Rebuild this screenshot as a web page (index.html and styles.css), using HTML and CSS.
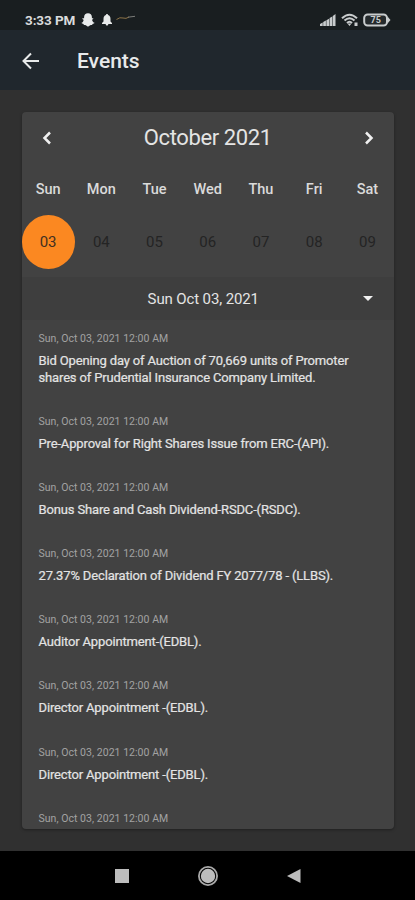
FILE: index.html
```html
<!DOCTYPE html>
<html lang="en">
<head>
<meta charset="utf-8">
<title>Events</title>
<link rel="stylesheet" href="styles.css">
</head>
<body>
<div class="status">
  <span class="clock">3:33 PM</span>
  <svg class="ghost" width="14" height="14" viewBox="0 0 14 14"><path d="M7 .3C4.600.3 3.100 2 3.100 4v1.300l-1.700-.1c-.4.6.4 1 1.200 1.500C2.600 8.300 1.700 9.300.5 9.800c.1.900 1.100 1 2 1.200l.4 1c1.500-.2 2.300.3 4.100 1.700 1.800-1.400 2.600-1.900 4.100-1.700l.4-1c.9-.2 1.900-.3 2-1.200-1.200-.5-2.100-1.500-2.500-3.100.8-.5 1.600-.9 1.200-1.500l-1.300.1V4C10.900 2 9.400.3 7 .3z"/></svg>
  <svg class="bell" width="12" height="14" viewBox="0 0 12 14"><path d="M6 1c.6 0 1 .4 1 1 1.800.5 2.500 2 2.500 4v2.500L11 10v1H1v-1l1.500-1.500V6c0-2 .7-3.500 2.500-4 0-.6.4-1 1-1zM4.700 11h2.600c0 2-2.600 2-2.600 0z"/></svg>
  <svg class="swoosh" width="20" height="8" viewBox="0 0 20 8"><path d="M.5 5.500Q4 2.800 7 4t6-1" stroke="#8d7347"/><path d="M12 3.200l7-.9" stroke="#7b7c79"/></svg>
  <svg class="signal" width="18" height="14" viewBox="0 0 18 14"><path d="M1 13v-2l2.700-1.500V13zM4.200 13V9l2.700-1.500V13zM7.400 13V7.200l2.700-1.500V13zM10.600 13V5l2.700-1.500V13zM13.800 13V3l2.700-2v12z"/></svg>
  <svg class="wifi" width="18" height="14" viewBox="0 0 18 14"><path d="M1 5.200q7.500-7 15 0M3.500 7.600q5-4.600 10 0M6 10q2.500-2.400 5 0" fill="none" stroke="#c9cccd" stroke-width="2"/><path d="M6.500 10.500L8.500 13l2-2.500zM13.500 9.500h3v3.500h-3z"/></svg>
  <svg class="battery" width="28" height="14" viewBox="0 0 28 14"><rect x="1.200" y="1.400" width="22.800" height="11.200" rx="3.500" fill="#252a2c" stroke="#c9cccd" stroke-width="2"/><path d="M24.500 3.500L27.500 7l-3 3.500z"/><text x="7.500" y="10.300">75</text></svg>
</div>
<header class="appbar">
  <svg width="20" height="20" viewBox="0 0 20 20"><path d="M18 10H2.500M10 2.500L2.500 10l7.500 7.500"/></svg>
  <h1>Events</h1>
</header>
<main>
  <section class="card">
    <div class="month">
      <svg width="10" height="14" viewBox="0 0 10 14"><path d="M8 1.500L2.500 7 8 12.500"/></svg>
      <h2>October 2021</h2>
      <svg width="10" height="14" viewBox="0 0 10 14"><path d="M2 1.500L7.500 7 2 12.500"/></svg>
    </div>
    <div class="week names"><span>Sun</span><span>Mon</span><span>Tue</span><span>Wed</span><span>Thu</span><span>Fri</span><span>Sat</span></div>
    <div class="week days"><span class="selected">03</span><span>04</span><span>05</span><span>06</span><span>07</span><span>08</span><span>09</span></div>
    <div class="picked"><span>Sun Oct 03, 2021</span><i class="caret"></i></div>
    <div class="events">
      <article><time>Sun, Oct 03, 2021 12:00 AM</time><p>Bid Opening day of Auction of 70,669 units of Promoter<br>shares of Prudential Insurance Company Limited.</p></article>
      <article><time>Sun, Oct 03, 2021 12:00 AM</time><p>Pre-Approval for Right Shares Issue from ERC-(API).</p></article>
      <article><time>Sun, Oct 03, 2021 12:00 AM</time><p>Bonus Share and Cash Dividend-RSDC-(RSDC).</p></article>
      <article><time>Sun, Oct 03, 2021 12:00 AM</time><p>27.37% Declaration of Dividend FY 2077/78 - (LLBS).</p></article>
      <article><time>Sun, Oct 03, 2021 12:00 AM</time><p>Auditor Appointment-(EDBL).</p></article>
      <article><time>Sun, Oct 03, 2021 12:00 AM</time><p>Director Appointment -(EDBL).</p></article>
      <article><time>Sun, Oct 03, 2021 12:00 AM</time><p>Director Appointment -(EDBL).</p></article>
      <article><time>Sun, Oct 03, 2021 12:00 AM</time></article>
    </div>
  </section>
</main>
<nav>
  <svg width="16" height="16" viewBox="0 0 16 16"><path d="M1 1h14v14H1z"/></svg>
  <svg width="22" height="22" viewBox="0 0 22 22"><circle cx="11" cy="11" r="9.100" fill="none" stroke="#aaa" stroke-width="1.800"/><circle cx="11" cy="11" r="7.200"/></svg>
  <svg width="16" height="16" viewBox="0 0 16 16"><path d="M1 8L14.500 1v14z"/></svg>
</nav>
</body>
</html>
```
FILE: styles.css
```css
* { box-sizing: border-box; }
body { margin: 0; width: 415px; height: 900px; display: flex; flex-direction: column; overflow: hidden; background: #303030; color: #e4e4e4; font-family: Roboto, sans-serif; }
svg { display: block; flex: none; }
h1, h2, p { margin: 0; font-weight: 400; }
.status { height: 30px; flex: none; display: flex; align-items: center; padding: 9px 24px 0 25px; background: #191e20; }
.status svg { fill: #c9cccd; }
.clock { width: 56px; font-size: 13.500px; font-weight: 700; letter-spacing: -.1px; white-space: nowrap; color: #d9dbdc; }
.status .ghost, .status .bell { fill: #e8eaea; }
.status .bell { margin-left: 6px; }
.status .swoosh { margin: -3px 0 0 3px; fill: none; }
.signal { margin-left: auto; }
.wifi { margin-left: 4px; }
.battery { margin-left: 4px; }
.battery text { font-size: 9px; font-weight: 700; fill: #c9cccd; }
.appbar { height: 60px; flex: none; display: flex; align-items: center; padding: 2px 0 0 21px; gap: 36px; background: #20272d; }
.appbar svg { fill: none; stroke: #e8eaea; stroke-width: 2; }
.appbar h1 { font-size: 21px; font-weight: 500; line-height: 26px; color: #e8eaeb; }
main { height: 761px; flex: none; padding: 22px 21px 22px 21.5px; }
.card { height: 717px; border-radius: 4px; overflow: hidden; background: #424242; box-shadow: 0 1px 3px rgba(0,0,0,.35); }
.month { height: 51px; display: flex; align-items: center; justify-content: space-between; padding: 0 20px; }
.month svg { fill: none; stroke: #f0f0f0; stroke-width: 2.500; }
.month h2 { font-size: 22px; line-height: 28px; letter-spacing: -.4px; }
.week { display: grid; grid-template-columns: repeat(7, 1fr); text-align: center; }
.names { height: 52px; align-items: center; padding-top: 1px; font-size: 14.500px; font-weight: 500; color: #dadada; }
.days { height: 62px; font-size: 15px; line-height: 55px; color: #242424; }
.selected { height: 54px; border-radius: 50%; background: #fb8821; color: #423020; }
.picked { height: 43px; position: relative; display: flex; align-items: center; justify-content: center; padding-right: 9px; background: #3e3e3e; font-size: 15px; letter-spacing: -.12px; }
.caret { position: absolute; right: 21px; top: 19px; border: 5px solid transparent; border-top-color: #f0f0f0; border-bottom: 0; }
.events { padding: 10px 17px 0; }
article { padding-bottom: 27.100px; }
time { display: block; height: 17px; line-height: 18px; font-size: 10.500px; letter-spacing: .04px; color: #a2a2a2; white-space: nowrap; }
article p { padding-top: 5px; line-height: 17px; font-size: 13px; letter-spacing: -.15px; white-space: nowrap; -webkit-text-stroke: .2px currentColor; }
nav { height: 49px; flex: none; display: flex; justify-content: center; align-items: center; gap: 67px; background: #000; }
nav svg { fill: #bdbdbd; }
```
